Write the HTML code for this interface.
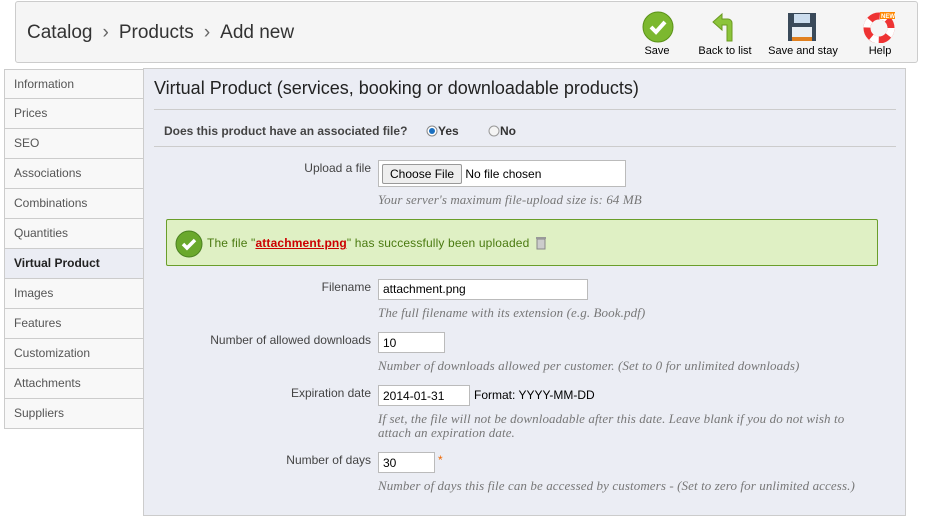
<!DOCTYPE html>
<html><head><style>
*{box-sizing:border-box;margin:0;padding:0}
body{width:929px;height:531px;background:#fff;font-family:"Liberation Sans",sans-serif;font-size:12px;color:#333;position:relative;overflow:hidden}
.hdr{position:absolute;left:15px;top:1px;width:903px;height:62px;background:#f5f5f5;border:1px solid #ccc;border-radius:3px}
.bc{position:absolute;left:11px;top:20px;font-size:19px;color:#333}
.bc span{color:#666;margin:0 10px}
.tb{position:absolute;top:0;text-align:center;font-size:11px;color:#000}
.tb .l{position:absolute;top:43px;white-space:nowrap;transform:translateX(-50%)}
.tabs{position:absolute;left:4px;top:69px;width:140px}
.tab{height:30px;border:1px solid #ccc;border-top:none;background:#f8f8f8;padding:7px 9px;color:#555;font-size:12px}
.tab:first-child{border-top:1px solid #ccc}
.tab.a{background:#ebedf4;font-weight:bold;color:#222;border-right:none}
.pan{position:absolute;left:143px;top:68px;width:763px;height:448px;background:#ebedf4;border:1px solid #ccc}
.ab{position:absolute;white-space:nowrap}
.hr{position:absolute;left:10px;width:742px;height:1px;background:#ccc}
.lab{position:absolute;right:534px;text-align:right;color:#444;white-space:nowrap}
.inp{position:absolute;background:#fff;border:1px solid #bbb;height:23px;padding:4px 4px;font-size:12px;color:#000}
.hint{position:absolute;left:234px;font-family:"Liberation Serif",serif;font-style:italic;font-size:13px;letter-spacing:0.1px;color:#777;line-height:14px;white-space:nowrap}
</style></head><body>
<div class="hdr">
 <div class="bc">Catalog<span>›</span>Products<span>›</span>Add new</div>
 <svg style="position:absolute;left:626px;top:9px" width="32" height="32"><circle cx="16" cy="16" r="15" fill="#7cb82f" stroke="#5a9218"/><path d="M9 16l5 5 9-10" stroke="#fff" stroke-width="4" fill="none"/></svg>
 <div class="tb l" style="left:641px"><div class="l">Save</div></div>
 <svg style="position:absolute;left:694px;top:9px" width="32" height="32"><path d="M22 30V12a4 4 0 0 0-4-4H12V3L3 11l9 8v-5h5v16z" fill="#8cc43a" stroke="#6a9a20"/></svg>
 <div class="tb" style="left:709px"><div class="l">Back to list</div></div>
 <svg style="position:absolute;left:771px;top:10px" width="30" height="30"><rect x="1" y="1" width="28" height="28" fill="#3a4a5a"/><rect x="7" y="2" width="16" height="9" fill="#cde"/><rect x="5" y="15" width="20" height="10" fill="#e8eef4"/><rect x="5" y="25" width="20" height="4" fill="#e08020"/></svg>
 <div class="tb" style="left:787px"><div class="l">Save and stay</div></div>
 <svg style="position:absolute;left:847px;top:9px" width="32" height="32"><circle cx="16" cy="17" r="12" fill="none" stroke="#e33" stroke-width="7"/><circle cx="16" cy="17" r="12" fill="none" stroke="#fff" stroke-width="7" stroke-dasharray="8 11"/><rect x="17" y="1" width="15" height="7" fill="#f80"/><text x="18" y="7" font-size="6" fill="#fff" font-weight="bold">NEW</text></svg>
 <div class="tb" style="left:864px"><div class="l">Help</div></div>
</div>
<div class="tabs">
<div class="tab">Information</div><div class="tab">Prices</div><div class="tab">SEO</div><div class="tab">Associations</div><div class="tab">Combinations</div><div class="tab">Quantities</div><div class="tab a">Virtual Product</div><div class="tab">Images</div><div class="tab">Features</div><div class="tab">Customization</div><div class="tab">Attachments</div><div class="tab">Suppliers</div>
</div>
<div class="pan">
 <div class="ab" style="left:10px;top:9px;font-size:18px;color:#222">Virtual Product (services, booking or downloadable products)</div>
 <div class="hr" style="top:40px"></div>
 <div class="ab" style="left:20px;top:55px;font-weight:bold;color:#444">Does this product have an associated file?</div>
 <svg class="ab" style="left:282px;top:56px" width="12" height="12"><circle cx="6" cy="6" r="5" fill="#fff" stroke="#888"/><circle cx="6" cy="6" r="3" fill="#1a6fc0"/></svg>
 <div class="ab" style="left:294px;top:55px;font-weight:bold">Yes</div>
 <svg class="ab" style="left:344px;top:56px" width="12" height="12"><circle cx="6" cy="6" r="5" fill="#f4f4f4" stroke="#999"/></svg>
 <div class="ab" style="left:356px;top:55px;font-weight:bold">No</div>
 <div class="hr" style="top:77px"></div>
 <div class="lab" style="top:92px">Upload a file</div>
 <div class="inp" style="left:234px;top:91px;width:248px;height:27px;padding:3px"><span style="display:inline-block;border:1px solid #999;border-radius:2px;background:#eee;padding:2px 7px">Choose File</span> No file chosen</div>
 <div class="hint" style="top:124px">Your server's maximum file-upload size is: 64 MB</div>
 <div class="ab" style="left:22px;top:150px;width:712px;height:47px;background:#dff0c4;border:1px solid #6a9e2a;border-radius:2px"></div>
 <svg class="ab" style="left:31px;top:161px" width="28" height="28"><circle cx="14" cy="14" r="13" fill="#6aa82c" stroke="#4a8020"/><path d="M8 14l4 4 8-8" stroke="#fff" stroke-width="3.5" fill="none"/></svg>
 <div class="ab" style="left:63px;top:167px;color:#4a7a10;letter-spacing:0.15px">The file "<span style="color:#c00;font-weight:bold;text-decoration:underline">attachment.png</span>" has successfully been uploaded</div>
 <svg class="ab" style="left:392px;top:167px" width="10" height="14"><rect x="1" y="3" width="8" height="10" fill="#ccc" stroke="#888"/><rect x="0" y="1" width="10" height="2" fill="#999"/></svg>
 <div class="lab" style="top:211px">Filename</div>
 <div class="inp" style="left:234px;top:210px;width:210px;height:21px;padding:2px 4px">attachment.png</div>
 <div class="hint" style="top:237px">The full filename with its extension (e.g. Book.pdf)</div>
 <div class="lab" style="top:264px">Number of allowed downloads</div>
 <div class="inp" style="left:234px;top:263px;width:67px;height:21px;padding:3px 4px">10</div>
 <div class="hint" style="top:290px">Number of downloads allowed per customer. (Set to 0 for unlimited downloads)</div>
 <div class="lab" style="top:317px">Expiration date</div>
 <div class="inp" style="left:234px;top:316px;width:92px;height:21px;padding:3px 4px">2014-01-31</div>
 <div class="ab" style="left:330px;top:319px;color:#000">Format: YYYY-MM-DD</div>
 <div class="hint" style="top:343px">If set, the file will not be downloadable after this date. Leave blank if you do not wish to<br>attach an expiration date.</div>
 <div class="lab" style="top:384px">Number of days</div>
 <div class="inp" style="left:234px;top:383px;width:57px;height:21px;padding:3px 4px">30</div>
 <div class="ab" style="left:294px;top:384px;color:#e60">*</div>
 <div class="hint" style="top:410px">Number of days this file can be accessed by customers - (Set to zero for unlimited access.)</div>
</div>
</body></html>
